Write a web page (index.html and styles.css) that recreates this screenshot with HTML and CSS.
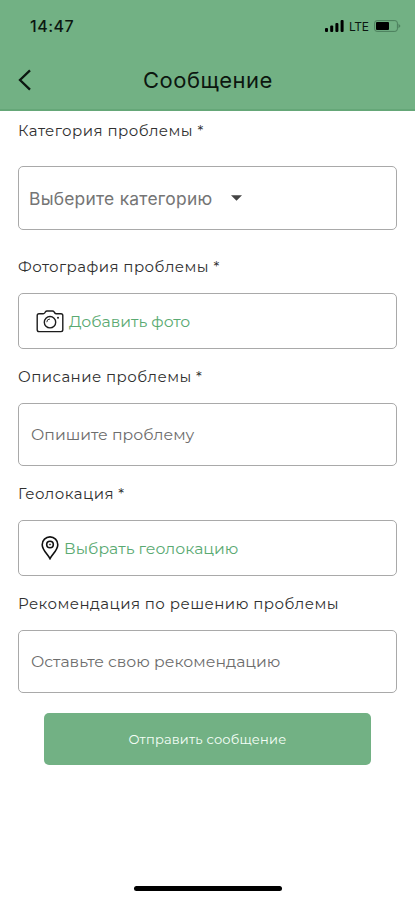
FILE: index.html
```html
<!DOCTYPE html>
<html lang="ru">
<head>
<meta charset="utf-8">
<meta name="viewport" content="width=device-width, initial-scale=1">
<title>Сообщение</title>
<link rel="stylesheet" href="styles.css">
</head>
<body>
<header class="header">
  <div class="status">
    <span class="time">14:47</span>
    <div class="indicators">
      <svg class="signal" width="19" height="12" viewBox="0 0 19 12"><rect x="0" y="8" width="3" height="4" rx="1"/><rect x="5.2" y="5.5" width="3" height="6.5" rx="1"/><rect x="10.4" y="3" width="3" height="9" rx="1"/><rect x="15.6" y="0" width="3" height="12" rx="1"/></svg>
      <span class="network">LTE</span>
      <svg class="battery" width="27" height="12" viewBox="0 0 27 12"><rect x=".6" y=".6" width="22.8" height="10.8" rx="2.5" fill="none" stroke="#4b7e5c"/><rect x="2" y="2" width="13" height="8" rx="1"/><path d="M24.5 3.5 26.5 6l-2 2.5z" fill="#4b7e5c"/></svg>
    </div>
  </div>
  <div class="toolbar">
    <svg class="back" width="14" height="22" viewBox="0 0 14 22"><path d="M12 1.3 2 11l10 9.7" fill="none" stroke="#0c1710" stroke-width="2.3"/></svg>
    <h1 class="title">Сообщение</h1>
  </div>
</header>
<main class="form">
  <label class="label l-category">Категория проблемы *</label>
  <div class="box select"><span class="select-text">Выберите категорию</span><svg width="11" height="6" viewBox="0 0 12 6"><path d="M0 0h12L6 6z" fill="#444"/></svg></div>
  <label class="label l-photo">Фотография проблемы *</label>
  <div class="box action photo">
    <svg width="28" height="23" viewBox="0 0 28 23" fill="none" stroke="#1c1c1c" stroke-width="1.4"><path d="M3 3.800h4.200q1 0 1.500-.8l.7-1.100q.6-.9 1.600-.9h5.500q1 0 1.600.9l.7 1.100q.5.8 1.500.8H25q1.800 0 1.800 1.800v14.200q0 1.800-1.800 1.800H3q-1.800 0-1.800-1.800V5.600q0-1.800 1.800-1.800z"/><circle cx="14" cy="12.200" r="5.700"/><path d="M10.800 12.200a3.200 3.200 0 0 1 3.200-3.200" stroke-width=".9"/><circle cx="22" cy="7.700" r="1" fill="#1c1c1c" stroke="none"/></svg>
    <span class="photo-text">Добавить фото</span>
  </div>
  <label class="label l-about">Описание проблемы *</label>
  <div class="box input"><span class="about-text">Опишите проблему</span></div>
  <label class="label l-geo">Геолокация *</label>
  <div class="box action geo">
    <svg width="18" height="24" viewBox="0 0 18 24" fill="none" stroke="#111" stroke-width="1.6"><path d="M9 22.700C7 18.700 1.200 14 1.200 8.700a7.800 7.800 0 0 1 15.600 0C16.800 14 11 18.700 9 22.700z"/><circle cx="9" cy="8.500" r="3.300"/><circle cx="9" cy="8.500" r=".6" stroke-width=".8"/></svg>
    <span class="geo-text">Выбрать геолокацию</span>
  </div>
  <label class="label l-advice">Рекомендация по решению проблемы</label>
  <div class="box input"><span class="advice-text">Оставьте свою рекомендацию</span></div>
  <button class="submit" type="button">Отправить сообщение</button>
</main>
<footer class="home"><div class="home-bar"></div></footer>
</body>
</html>
```
FILE: styles.css
```css
* { box-sizing: border-box; }
body { margin: 0; height: 900px; display: flex; flex-direction: column; background: #fff; color: #303030; font-family: Montserrat, Inter, "Noto Sans", sans-serif; overflow: hidden; }
.header { height: 111px; background: #72b184; border-bottom: 2px solid #65a778; color: #0c1710; font-family: Inter, sans-serif; }
.status { height: 52px; padding: 0 14px 0 30px; display: flex; align-items: center; justify-content: space-between; }
.time { font-size: 16px; font-weight: 500; letter-spacing: .5px; }
.indicators { display: flex; align-items: center; }
.network { font-size: 12px; margin: 0 5px 0 5px; width: 20px; letter-spacing: -.3px; }
.toolbar { height: 56px; padding-left: 18px; display: grid; grid-template-columns: 125px 1fr; align-items: center; }
.title { margin: 0; font-size: 22px; font-weight: 400; letter-spacing: .5px; line-height: 28px; }
.form { flex: 1; padding: 0 18px; display: flex; flex-direction: column; }
.label { display: flex; align-items: center; flex: none; font-size: 15px; white-space: nowrap; letter-spacing: .44px; }
.l-category { height: 55px; padding-bottom: 17px; }
.l-photo { height: 63px; padding-top: 10px; }
.l-about { height: 54px; }
.l-geo { height: 54px; }
.l-advice { height: 54px; }
.box { flex: none; display: flex; align-items: center; border: 1px solid #a9a9a9; border-radius: 5px; white-space: nowrap; }
.select { height: 64px; padding-left: 10px; gap: 19px; color: #757575; }
.select-text { width: 183px; font: 400 17.4px Inter, sans-serif; letter-spacing: .25px; }
.action { height: 56px; color: #5aaa72; font-size: 15.7px; }
.photo { padding-left: 17px; gap: 5px; }
.geo { padding-left: 22px; gap: 5px; }
.input { height: 63px; padding-left: 12px; font-size: 15.7px; color: #6d6d6d; }
.submit { flex: none; height: 52px; margin: 20px 26px 0; padding: 0; border: 0; border-radius: 5px; background: #72b184; color: #f5fff7; font: 400 13px Montserrat, Inter, sans-serif; letter-spacing: .2px; }
.home { height: 14px; display: flex; justify-content: center; }
.home-bar { width: 148px; height: 5px; border-radius: 3px; background: #000; }
```
